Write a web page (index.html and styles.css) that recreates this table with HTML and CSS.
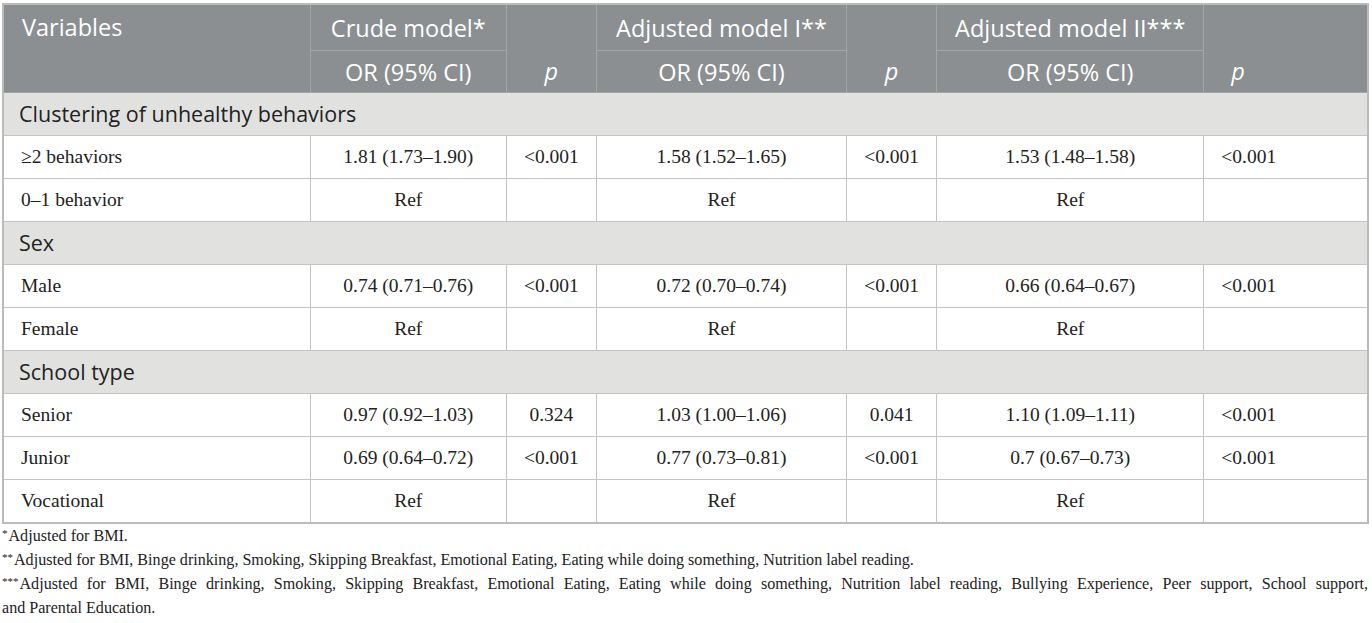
FILE: index.html
```html
<!DOCTYPE html>
<html>
<head>
<meta charset="utf-8">
<link rel="stylesheet" href="styles.css">
</head>
<body>
<table class="tbl">
  <colgroup>
    <col class="c1"><col class="c2"><col class="c3"><col class="c4"><col class="c5"><col class="c6"><col class="c7">
  </colgroup>
  <thead>
    <tr class="h1">
      <th class="left" rowspan="2">Variables</th>
      <th class="sub">Crude model*</th>
      <th class="pcell" rowspan="2"><i>p</i></th>
      <th class="sub">Adjusted model I**</th>
      <th class="pcell" rowspan="2"><i>p</i></th>
      <th class="sub">Adjusted model II***</th>
      <th class="pcell last" rowspan="2"><i>p</i></th>
    </tr>
    <tr class="h2">
      <th>OR (95% CI)</th>
      <th>OR (95% CI)</th>
      <th>OR (95% CI)</th>
    </tr>
  </thead>
  <tbody>
    <tr class="grp"><td colspan="7">Clustering of unhealthy behaviors</td></tr>
    <tr><td class="left">&ge;2 behaviors</td><td>1.81 (1.73–1.90)</td><td>&lt;0.001</td><td>1.58 (1.52–1.65)</td><td>&lt;0.001</td><td>1.53 (1.48–1.58)</td><td class="last">&lt;0.001</td></tr>
    <tr><td class="left">0–1 behavior</td><td>Ref</td><td></td><td>Ref</td><td></td><td>Ref</td><td class="last"></td></tr>
    <tr class="grp"><td colspan="7">Sex</td></tr>
    <tr><td class="left">Male</td><td>0.74 (0.71–0.76)</td><td>&lt;0.001</td><td>0.72 (0.70–0.74)</td><td>&lt;0.001</td><td>0.66 (0.64–0.67)</td><td class="last">&lt;0.001</td></tr>
    <tr><td class="left">Female</td><td>Ref</td><td></td><td>Ref</td><td></td><td>Ref</td><td class="last"></td></tr>
    <tr class="grp"><td colspan="7">School type</td></tr>
    <tr><td class="left">Senior</td><td>0.97 (0.92–1.03)</td><td>0.324</td><td>1.03 (1.00–1.06)</td><td>0.041</td><td>1.10 (1.09–1.11)</td><td class="last">&lt;0.001</td></tr>
    <tr><td class="left">Junior</td><td>0.69 (0.64–0.72)</td><td>&lt;0.001</td><td>0.77 (0.73–0.81)</td><td>&lt;0.001</td><td>0.7 (0.67–0.73)</td><td class="last">&lt;0.001</td></tr>
    <tr><td class="left">Vocational</td><td>Ref</td><td></td><td>Ref</td><td></td><td>Ref</td><td class="last"></td></tr>
  </tbody>
</table>
<div class="notes">
  <p><sup>*</sup>Adjusted for BMI.</p>
  <p><sup>**</sup>Adjusted for BMI, Binge drinking, Smoking, Skipping Breakfast, Emotional Eating, Eating while doing something, Nutrition label reading.</p>
  <p><span class="jline"><sup>***</sup>Adjusted for BMI, Binge drinking, Smoking, Skipping Breakfast, Emotional Eating, Eating while doing something, Nutrition label reading, Bullying Experience, Peer support, School support,</span>and Parental Education.</p>
</div>
</body>
</html>
```
FILE: styles.css
```css
html, body {
  margin: 0;
  padding: 0;
  background: #ffffff;
}
body {
  padding: 3px 0 0 2px;
}
.tbl {
  border-collapse: collapse;
  table-layout: fixed;
  width: 1367px;
  border: 2px solid #b9bcb9;
  font-family: "Liberation Serif", serif;
  font-size: 19.5px;
  color: #222;
}
.c1 { width: 307px; }
.c2 { width: 196px; }
.c3 { width: 90px; }
.c4 { width: 250px; }
.c5 { width: 90px; }
.c6 { width: 267px; }
.c7 { width: 164px; }
.tbl th {
  background: #8b8f91;
  color: #ffffff;
  font-family: "Open Sans", sans-serif;
  font-weight: 400;
  font-size: 23.5px;
  line-height: 28px;
  border: 1px solid #a3a6a7;
  text-align: center;
  padding: 0 6px;
  white-space: nowrap;
}
.tbl tr.h1 th { height: 45px; }
.tbl tr.h2 th { height: 41px; }
.tbl th.left {
  text-align: left;
  vertical-align: top;
  padding-top: 8px;
  padding-left: 18px;
}
.tbl th.pcell {
  vertical-align: bottom;
  padding-bottom: 7px;
}
.tbl th.pcell.last {
  text-align: left;
  padding-left: 27px;
}
.tbl td {
  height: 42px;
  border: 1px solid #c3c5c3;
  text-align: center;
  padding: 0 6px;
  vertical-align: middle;
  line-height: 22px;
}
.tbl td.left {
  text-align: left;
  padding-left: 17px;
}
.tbl td.last {
  text-align: left;
  padding-left: 17px;
}
.tbl tr.grp td {
  background: #e1e2e0;
  font-family: "Open Sans", sans-serif;
  font-size: 21.5px;
  color: #222;
  text-align: left;
  padding-left: 15px;
  height: 42px;
}
.notes {
  font-family: "Liberation Serif", serif;
  font-size: 16.1px;
  color: #222;
  width: 1366px;
}
.notes p {
  margin: 0;
  line-height: 24px;
}
.notes .jline {
  display: block;
  text-align: justify;
  text-align-last: justify;
}
.notes sup {
  font-size: 11px;
  vertical-align: top;
  line-height: 18px;
  margin-right: 1px;
}
```
